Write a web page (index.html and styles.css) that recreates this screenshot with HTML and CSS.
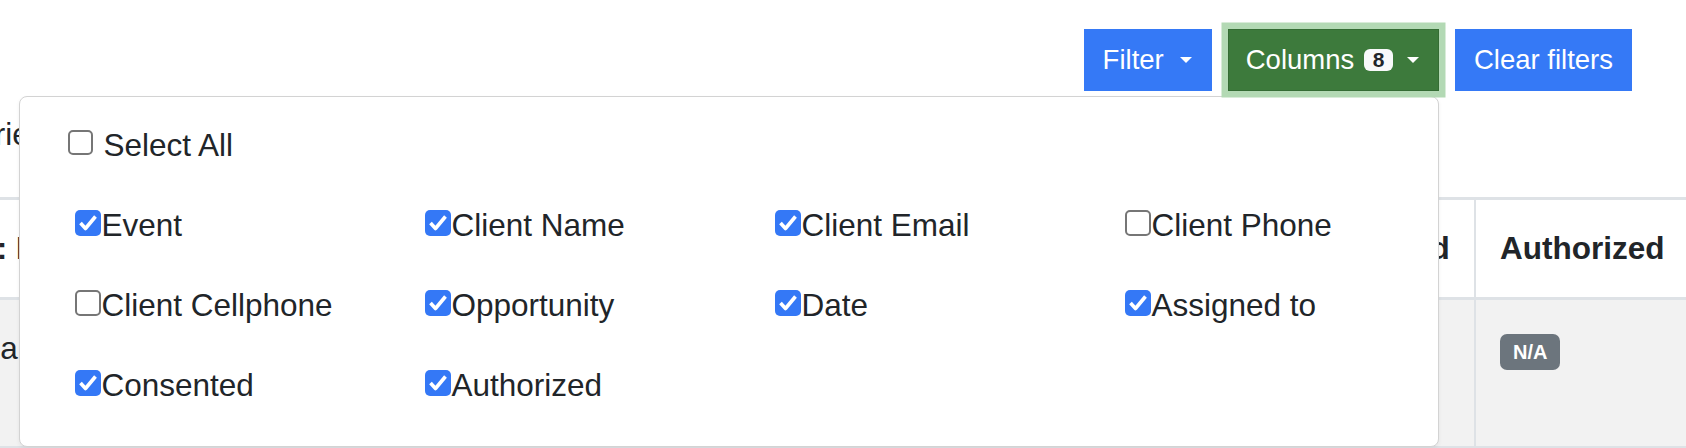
FILE: index.html
```html
<!DOCTYPE html>
<html lang="en">
<head>
    <meta charset="UTF-8">
    <meta name="viewport" content="width=device-width, initial-scale=1.0">
    <title>Events - Columns</title>
    <link rel="stylesheet" href="styles.css">
</head>
<body>
    <div class="toolbar">
        <button class="btn btn-blue btn-filter">Filter<span class="caret"></span></button>

        <div class="btn-group">
            <button class="btn btn-green">Columns<span class="count">8</span><span class="caret"></span></button>

            <div class="dropdown">
                <label class="select-all"><span class="box"></span>Select All</label>

                <div class="col-grid">
                    <label class="opt"><span class="box on"><svg viewBox="0 0 26 26"><polyline points="5.5,13 10.5,18.5 20.5,6.5"/></svg></span>Event</label>
                    <label class="opt"><span class="box on"><svg viewBox="0 0 26 26"><polyline points="5.5,13 10.5,18.5 20.5,6.5"/></svg></span>Client Name</label>
                    <label class="opt"><span class="box on"><svg viewBox="0 0 26 26"><polyline points="5.5,13 10.5,18.5 20.5,6.5"/></svg></span>Client Email</label>
                    <label class="opt"><span class="box"></span>Client Phone</label>

                    <label class="opt"><span class="box"></span>Client Cellphone</label>
                    <label class="opt"><span class="box on"><svg viewBox="0 0 26 26"><polyline points="5.5,13 10.5,18.5 20.5,6.5"/></svg></span>Opportunity</label>
                    <label class="opt"><span class="box on"><svg viewBox="0 0 26 26"><polyline points="5.5,13 10.5,18.5 20.5,6.5"/></svg></span>Date</label>
                    <label class="opt"><span class="box on"><svg viewBox="0 0 26 26"><polyline points="5.5,13 10.5,18.5 20.5,6.5"/></svg></span>Assigned to</label>

                    <label class="opt"><span class="box on"><svg viewBox="0 0 26 26"><polyline points="5.5,13 10.5,18.5 20.5,6.5"/></svg></span>Consented</label>
                    <label class="opt"><span class="box on"><svg viewBox="0 0 26 26"><polyline points="5.5,13 10.5,18.5 20.5,6.5"/></svg></span>Authorized</label>
                </div>
            </div>
        </div>

        <button class="btn btn-blue">Clear filters</button>
    </div>

    <p class="summary">entries found</p>

    <div class="data-table">
        <div class="cell head">Code: ID</div>
        <div class="cell head">Consented</div>
        <div class="cell head">Authorized</div>

        <div class="cell">Juliana</div>
        <div class="cell"><span class="badge">N/A</span></div>
        <div class="cell"><span class="badge">N/A</span></div>
    </div>
</body>
</html>
```

FILE: styles.css
```css
body {
    margin: 0;
    font-family: "Liberation Sans", Arial, sans-serif;
    font-size: 31.5px;
    color: #212529;
    background-color: #fff;
    overflow: hidden;
}
.toolbar {
    display: flex;
    justify-content: flex-end;
    gap: 16px;
    padding: 29px 54px 0 0;
}
.btn {
    display: flex;
    align-items: center;
    height: 62px;
    padding: 0 19px;
    border: none;
    border-radius: 0;
    font-family: "Liberation Sans", Arial, sans-serif;
    font-size: 27.5px;
    color: white;
}
.btn-blue {
    background-color: #3579f6;
}
.btn-filter {
    padding-right: 20px;
}
.btn-green {
    position: relative;
    z-index: 3;
    padding: 0 20px 0 18px;
    background-color: #3d7a3c;
    box-shadow: inset 0 0 0 1px #356c34, 0 0 0 6.5px #b3d9b4;
}
.caret {
    width: 0;
    height: 0;
    margin-left: 16px;
    border-left: 6.5px solid transparent;
    border-right: 6.5px solid transparent;
    border-top: 6.5px solid white;
}
.btn-green .caret {
    margin-left: 14px;
}
.count {
    margin-left: 10px;
    padding: 0 8.5px;
    border-radius: 6px;
    background-color: #f8f9fa;
    color: #212529;
    font-size: 21px;
    font-weight: bold;
    line-height: 22px;
}
.btn-group {
    position: relative;
    display: flex;
}
.dropdown {
    position: absolute;
    right: 0;
    top: calc(100% + 5px);
    z-index: 2;
    box-sizing: border-box;
    width: 1420px;
    height: 351px;
    padding: 29.5px 0 0 48.5px;
    border: 1.5px solid #d3d3d3;
    border-radius: 8px;
    background-color: white;
    box-shadow: 0 2px 4px rgba(0,0,0,0.06);
}
.select-all,
.opt {
    display: flex;
    align-items: flex-start;
    line-height: 36px;
    white-space: nowrap;
}
.box {
    display: flex;
    flex: none;
    box-sizing: border-box;
    width: 25px;
    height: 25px;
    margin-top: 3px;
    border: 2px solid #767676;
    border-radius: 5px;
    background-color: white;
}
.select-all .box {
    margin-right: 10px;
}
.opt .box {
    width: 26px;
    height: 26px;
}
.box.on {
    border: none;
    background-color: #3478f6;
}
.box svg {
    width: 26px;
    height: 26px;
}
.box polyline {
    fill: none;
    stroke: white;
    stroke-width: 3.6;
    stroke-linejoin: round;
}
.col-grid {
    display: grid;
    grid-template-columns: 350px 350px 350px auto;
    row-gap: 44px;
    margin: 44px 0 0 7px;
}
.summary {
    margin: 19.5px 0 39.5px -49px;
    line-height: 47px;
}
.data-table {
    display: grid;
    grid-template-columns: 1367px 213px 320px;
    width: max-content;
    margin-left: -106px;
    border-top: 3px solid #dee2e6;
}
.cell {
    height: 96px;
    padding: 25px 24px;
    line-height: 47px;
    background-color: #f2f2f2;
    border-bottom: 2px solid #dee2e6;
    white-space: nowrap;
}
.cell + .cell {
    border-left: 2px solid #dee2e6;
}
.cell:nth-child(4) {
    border-left: none;
}
.head {
    height: 47px;
    background-color: white;
    font-weight: bold;
    border-bottom-width: 3px;
}
.badge {
    display: inline-block;
    vertical-align: top;
    margin-top: 9px;
    padding: 0 13px;
    border-radius: 7px;
    background-color: #6c757d;
    color: white;
    font-size: 20px;
    font-weight: bold;
    line-height: 36px;
}
```
